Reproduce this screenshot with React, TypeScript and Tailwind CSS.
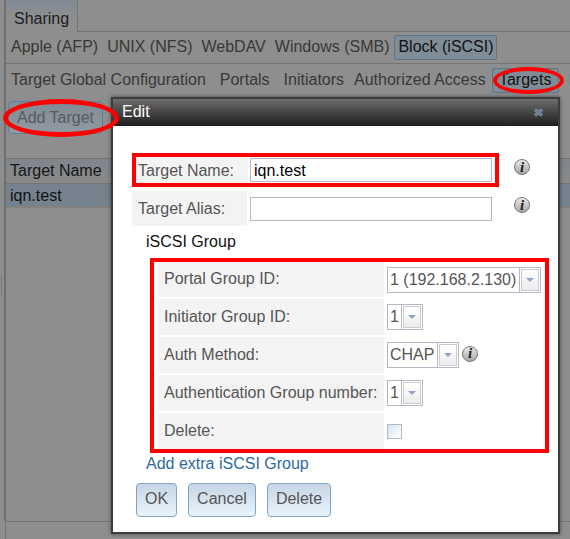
function InfoIcon() {
  return (
    <span className="flex h-[16px] w-[16px] items-center justify-center rounded-full border border-[#777] bg-gradient-to-b from-[#ececec] to-[#a6a6a6] font-['Liberation_Serif',serif] text-[15px] font-bold italic leading-none text-[#222]">
      i
    </span>
  );
}

function CloseIcon() {
  return (
    <svg width="11" height="9" viewBox="0 0 11 9" fill="none">
      <path d="M2 1.5 9 7.5M9 1.5 2 7.5" stroke="#8d959c" strokeWidth="3" />
      <path d="M2 1.5 9 7.5M9 1.5 2 7.5" stroke="#5b7a96" strokeWidth="1.5" />
    </svg>
  );
}

function Select({ value, width }: { value: string; width: string }) {
  return (
    <div className={`flex h-[26px] items-stretch border border-[#b3b8c6] bg-white ${width}`}>
      <span className="flex-1 pl-[2px] text-[16px] leading-[23px] text-[#555]">{value}</span>
      <span className="flex w-[21px] items-center justify-center border-l border-[#b3b8c6] p-[1px]">
        <span className="flex h-full w-full items-center justify-center border border-[#ccc] bg-gradient-to-b from-white to-[#ececec]">
          <span className="h-0 w-0 border-x-[4px] border-t-[4px] border-x-transparent border-t-[#8fa3c7]" />
        </span>
      </span>
    </div>
  );
}

function GroupRow({ label, children, first }: { label: string; children: React.ReactNode; first?: boolean }) {
  return (
    <div className={`flex ${first ? "h-[35px]" : "h-[36px]"}`}>
      <div className={`flex w-[226px] items-center bg-[#f3f3f3] pl-[6px] text-[16px] text-[#555] ${first ? "pb-[1px]" : ""}`}>
        {label}
      </div>
      <div className="flex items-center gap-[3px] pl-[3px]">{children}</div>
    </div>
  );
}

function DialogButton({ label, width }: { label: string; width: string }) {
  return (
    <button className={`h-[34px] rounded-[4px] border border-[#7fa5c6] bg-gradient-to-b from-[#c6d6e4] to-[#e9f3fc] pb-[2px] text-[16px] text-[#555] ${width}`}>
      {label}
    </button>
  );
}

export default function App() {
  return (
    <div className="relative h-[539px] w-[570px] overflow-hidden bg-[#8e8e8e] pl-[4px] font-['Liberation_Sans',sans-serif] text-[16px] text-[#383838]">
      {/* dimmed page behind the dialog */}
      <div className="absolute left-[1px] top-[276px] h-[19px] w-px bg-[#777]" />
      <div className="flex h-[521px] flex-col border-l-2 border-[#6f6f6f]">
        <div className="flex h-[32px] items-end border-b border-[#747474]">
          <div className="-mb-px flex h-[32px] w-[72px] items-center border-r border-[#747474] bg-gradient-to-b from-[#7f8a94] via-[#8e8e8e] to-[#8e8e8e] pl-[8px] pt-[5px] text-[#1c1c1c]">
            Sharing
          </div>
        </div>
        <div className="flex h-[32px] items-center gap-[9px] border-b border-[#747474] pb-[1px] pl-[5px]">
          <span>Apple (AFP)</span>
          <span>UNIX (NFS)</span>
          <span>WebDAV</span>
          <span>Windows (SMB)</span>
          <span className="-ml-[4px] flex h-[25px] w-[103px] items-center justify-center rounded-[2px] border border-[#5f7486] bg-[#7f8d98] text-[#111]">
            Block (iSCSI)
          </span>
        </div>
        <div className="flex h-[32px] items-center gap-[14px] whitespace-nowrap pl-[5px]">
          <span>Target Global Configuration</span>
          <span>Portals</span>
          <span>Initiators</span>
          <span className="-ml-[4px]">Authorized Access</span>
          <span className="-ml-[8px] flex h-[25px] w-[67px] shrink-0 items-center justify-center rounded-[2px] border border-[#5f7486] bg-[#7f8d98] text-[#111]">
            Targets
          </span>
          <span className="-ml-[4px]">Extents</span>
        </div>
        <div className="pl-[2px] pt-[5px]">
          <button className="h-[33px] w-[95px] rounded-[4px] border border-[#5f7f9c] bg-gradient-to-b from-[#7f8b95] to-[#909aa3] text-[#5a5a5a]">
            Add Target
          </button>
        </div>
        <div className="mt-[24px] flex h-[26px] items-center border-y border-[#747474] bg-gradient-to-b from-[#7f868c] to-[#8a8a8a] pl-[4px] text-[#161616]">
          Target Name
        </div>
        <div className="flex h-[24px] items-center border-b border-[#8b8470] bg-[#76838f] pl-[4px] text-[#111]">
          iqn.test
        </div>
      </div>
      <div className="ml-[1px] h-[18px] border-l border-t border-[#747474]" />

      {/* Edit dialog */}
      <div className="absolute left-[111px] top-[97px] h-[437px] w-[449px] border-2 border-[#3c3c3c] bg-white shadow-[0_0_4px_rgba(0,0,0,0.5)]">
        <div className="flex h-[27px] items-center justify-between bg-gradient-to-b from-[#6e6e6e] to-[#1f1f1f] pb-[1px] pl-[9px] pr-[14px] text-white">
          <span>Edit</span>
          <CloseIcon />
        </div>
        <div className="pl-[19px] pt-[27px]">
          <div className="flex items-start">
            <div className="flex h-[34px] w-[367px] border-4 border-[#ff0000]">
              <div className="flex w-[112px] items-center bg-[#f3f3f3] pl-[2px] pt-[1px] text-[#555]">Target Name:</div>
              <input
                readOnly
                value="iqn.test"
                className="ml-[2px] h-[24px] w-[242px] self-center border border-[#b3b8c6] bg-white pl-[3px] pt-[1px] text-[16px] text-black outline-none"
              />
            </div>
            <div className="ml-[15px] mt-[6px]">
              <InfoIcon />
            </div>
          </div>
          <div className="mt-[4px] flex items-start">
            <div className="flex h-[35px] w-[367px]">
              <div className="flex w-[115px] items-center bg-[#f3f3f3] pl-[6px] text-[#555]">Target Alias:</div>
              <input className="ml-[3px] mt-[6px] h-[24px] w-[242px] border border-[#b3b8c6] bg-white outline-none" />
            </div>
            <div className="ml-[15px] mt-[6px]">
              <InfoIcon />
            </div>
          </div>
          <div className="pl-[14px] pt-[7px] leading-[18px] text-[#111]">iSCSI Group</div>
          <div className="ml-[18px] mt-[7px] flex w-[399px] flex-col gap-[2px] border-4 border-[#ff0000] pl-[4px]">
            <GroupRow label="Portal Group ID:" first>
              <Select value="1 (192.168.2.130)" width="w-[154px]" />
            </GroupRow>
            <GroupRow label="Initiator Group ID:">
              <Select value="1" width="w-[36px]" />
            </GroupRow>
            <GroupRow label="Auth Method:">
              <Select value="CHAP" width="w-[72px]" />
              <span className="-mt-[3px]">
                <InfoIcon />
              </span>
            </GroupRow>
            <GroupRow label="Authentication Group number:">
              <Select value="1" width="w-[36px]" />
            </GroupRow>
            <GroupRow label="Delete:">
              <span className="mt-[1px] h-[15px] w-[15px] border border-[#b3b8c6] bg-gradient-to-br from-[#d5e3f0] to-white" />
            </GroupRow>
          </div>
          <div className="pl-[14px] pt-[2px] leading-[18px] text-[#2a6a9e]">Add extra iSCSI Group</div>
          <div className="flex gap-[11px] pl-[4px] pt-[10px]">
            <DialogButton label="OK" width="w-[41px]" />
            <DialogButton label="Cancel" width="w-[68px]" />
            <DialogButton label="Delete" width="w-[64px]" />
          </div>
        </div>
      </div>

      {/* hand-drawn red marks over the screenshot */}
      <div className="absolute left-[3px] top-[99px] h-[38px] w-[116px] rounded-[50%] border-[5px] border-[#ff0000]" />
      <div className="absolute left-[493px] top-[67px] h-[27px] w-[71px] rounded-[50%] border-[4px] border-[#ff0000]" />
    </div>
  );
}
